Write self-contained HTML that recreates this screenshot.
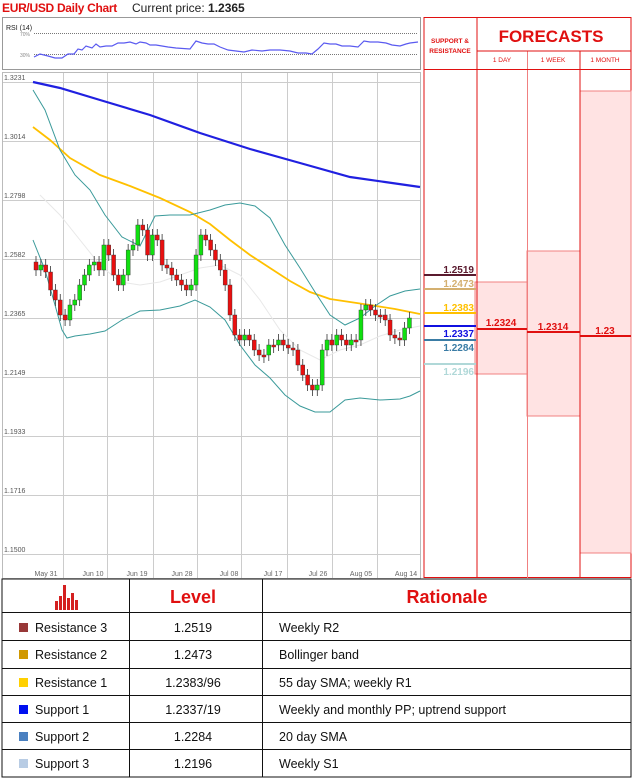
<!DOCTYPE html>
<html><head><meta charset="utf-8"><style>
body{margin:0;width:633px;height:778px;background:#fff;font-family:"Liberation Sans",sans-serif;position:relative;overflow:hidden}
.a{position:absolute}
</style></head><body>
<div class="a" style="left:2px;top:1px;font-size:12px;color:#e01010;font-weight:bold;letter-spacing:-0.3px">EUR/USD Daily Chart</div>
<div class="a" style="left:132px;top:1px;font-size:12px;color:#222">Current price: <b>1.2365</b></div>

<svg class="a" style="left:0;top:0" width="633" height="778" xmlns="http://www.w3.org/2000/svg" font-family="Liberation Sans, sans-serif">
<rect x="2.5" y="17.5" width="418" height="52" fill="#fff" stroke="#999"/>
<text x="6" y="30" font-size="7" fill="#222">RSI (14)</text>
<text x="20" y="36" font-size="5" fill="#888">70%</text>
<text x="20" y="57" font-size="5" fill="#888">30%</text>
<line x1="34" y1="33.5" x2="418" y2="33.5" stroke="#777" stroke-dasharray="1,1"/>
<line x1="34" y1="54.5" x2="418" y2="54.5" stroke="#777" stroke-dasharray="1,1"/>
<polyline fill="none" stroke="#5a5af0" stroke-width="1.2" points="34,57 40,54 48,56 55,58 62,58 68,54 74,54 78,49 82,50 86,46 92,48 96,44 100,47 106,46 112,46 118,43 124,43 130,42 136,44 140,42 146,43 150,45 156,45 162,46 168,47 176,48 190,49 196,41 202,43 208,44 214,44 220,47 228,50 236,51 244,52 252,50 262,51 270,50 280,50 290,51 298,53 306,53 312,54 318,49 324,43 330,44 336,44 342,46 350,46 358,47 364,41 370,42 378,42 386,43 392,45 400,46 406,44 410,43 418,42"/>
<rect x="2.5" y="72.5" width="418" height="506" fill="#fff" stroke="#bbb"/>
<g stroke="#ccc" stroke-width="1">
<line x1="3" y1="82.5" x2="420" y2="82.5"/><line x1="3" y1="141.5" x2="420" y2="141.5"/><line x1="3" y1="200.5" x2="420" y2="200.5"/><line x1="3" y1="259.5" x2="420" y2="259.5"/><line x1="3" y1="318.5" x2="420" y2="318.5"/><line x1="3" y1="377.5" x2="420" y2="377.5"/><line x1="3" y1="436.5" x2="420" y2="436.5"/><line x1="3" y1="495.5" x2="420" y2="495.5"/><line x1="3" y1="554.5" x2="420" y2="554.5"/>
<line x1="63.5" y1="73" x2="63.5" y2="578"/><line x1="107.5" y1="73" x2="107.5" y2="578"/><line x1="153.5" y1="73" x2="153.5" y2="578"/><line x1="197.5" y1="73" x2="197.5" y2="578"/><line x1="241.5" y1="73" x2="241.5" y2="578"/><line x1="287.5" y1="73" x2="287.5" y2="578"/><line x1="332.5" y1="73" x2="332.5" y2="578"/><line x1="377.5" y1="73" x2="377.5" y2="578"/>
</g>
<g font-size="7" fill="#555">
<text x="4" y="80">1.3231</text><text x="4" y="139">1.3014</text><text x="4" y="198">1.2798</text><text x="4" y="257">1.2582</text><text x="4" y="316">1.2365</text><text x="4" y="375">1.2149</text><text x="4" y="434">1.1933</text><text x="4" y="493">1.1716</text><text x="4" y="552">1.1500</text>
</g>
<g font-size="7" fill="#666" text-anchor="middle">
<text x="46" y="576">May 31</text><text x="93" y="576">Jun 10</text><text x="137" y="576">Jun 19</text><text x="182" y="576">Jun 28</text><text x="229" y="576">Jul 08</text><text x="273" y="576">Jul 17</text><text x="318" y="576">Jul 26</text><text x="361" y="576">Aug 05</text><text x="406" y="576">Aug 14</text>
</g>
<polyline fill="none" stroke="#e8e8e8" stroke-width="1" points="40,195 60,215 80,240 100,265 120,282 140,285 160,282 180,275 200,268 220,265 240,275 260,300 280,330 300,350 320,360 340,350 360,345 380,336 400,330 420,326"/>
<polyline fill="none" stroke="#2020e0" stroke-width="2.2" points="33,82 60,88 100,100 150,115 200,133 250,149 300,163 350,177 385,182 420,187"/>
<polyline fill="none" stroke="#ffc000" stroke-width="1.8" points="33,127 50,140 70,158 100,175 130,186 160,198 190,212 210,224 230,240 250,255 270,268 290,281 310,292 330,299 350,302 370,305 395,309 420,314"/>
<polyline fill="none" stroke="#3a9a9a" stroke-width="1" points="33,90 45,110 60,150 75,175 90,190 105,215 122,237 140,246 155,216 170,215 190,215 210,210 225,205 240,203 255,206 270,218 285,245 300,268 315,292 330,315 345,325 360,318 375,306 390,296 405,291 420,289"/>
<polyline fill="none" stroke="#3a9a9a" stroke-width="1" points="33,240 45,270 55,305 62,330 67,338 75,336 90,334 105,331 122,320 140,311 160,310 180,306 195,300 210,307 225,320 240,345 255,365 270,378 285,395 300,406 315,412 330,412 345,400 360,398 380,400 400,399 410,396 420,391"/>
<g id="cnd"></g>
<rect x="424" y="17.5" width="207" height="560" fill="none" stroke="#e01010"/>
<rect x="475" y="282" width="52" height="92" fill="#ffe3e3" stroke="#f08080"/>
<rect x="527" y="251" width="53" height="165" fill="#ffe3e3" stroke="#f08080"/>
<rect x="580" y="91" width="51" height="462" fill="#ffe3e3" stroke="#f08080"/>
<g stroke="#e01010"><line x1="477" y1="18" x2="477" y2="578"/><line x1="527.5" y1="51" x2="527.5" y2="578" stroke="#f08080"/><line x1="580" y1="51" x2="580" y2="578"/><line x1="477" y1="51" x2="631" y2="51"/><line x1="424" y1="69.5" x2="631" y2="69.5"/></g>
<text x="551" y="42" font-size="17" font-weight="bold" fill="#e01010" text-anchor="middle">FORECASTS</text>
<g font-size="6.5" fill="#e01010" text-anchor="middle" font-weight="bold"><text x="450" y="43">SUPPORT &amp;</text><text x="450" y="53">RESISTANCE</text></g>
<g font-size="6.5" fill="#e01010" text-anchor="middle"><text x="502" y="62">1 DAY</text><text x="553" y="62">1 WEEK</text><text x="605" y="62">1 MONTH</text></g>
<g stroke-width="2"><line x1="424" y1="275" x2="476" y2="275" stroke="#5a1a2e"/><line x1="424" y1="289" x2="476" y2="289" stroke="#d4b070"/><line x1="424" y1="313" x2="476" y2="313" stroke="#ffc000"/><line x1="424" y1="326" x2="476" y2="326" stroke="#1010e0"/><line x1="424" y1="340" x2="476" y2="340" stroke="#3a7ca5"/><line x1="424" y1="364" x2="476" y2="364" stroke="#b0d8d8"/>
<line x1="477" y1="329" x2="527" y2="329" stroke="#e01010"/><line x1="527" y1="332" x2="580" y2="332" stroke="#e01010"/><line x1="580" y1="336" x2="631" y2="336" stroke="#e01010"/></g>
<g font-size="10" font-weight="bold" text-anchor="end"><text x="474" y="273" fill="#5a1a2e">1.2519</text><text x="474" y="287" fill="#d4b070">1.2473</text><text x="474" y="311" fill="#ffc000">1.2383</text><text x="474" y="337" fill="#1010e0">1.2337</text><text x="474" y="351" fill="#3a7ca5">1.2284</text><text x="474" y="375" fill="#b0d8d8">1.2196</text></g>
<g font-size="10" font-weight="bold" fill="#e01010" text-anchor="middle"><text x="501" y="326">1.2324</text><text x="553" y="330">1.2314</text><text x="605" y="334">1.23</text></g>
<rect x="2" y="579" width="629" height="198" fill="#fff" stroke="#111"/>
<g stroke="#111"><line x1="129.5" y1="579" x2="129.5" y2="777"/><line x1="262.5" y1="579" x2="262.5" y2="777"/>
<line x1="2" y1="612.5" x2="631" y2="612.5"/><line x1="2" y1="640.5" x2="631" y2="640.5"/><line x1="2" y1="668.5" x2="631" y2="668.5"/><line x1="2" y1="695.5" x2="631" y2="695.5"/><line x1="2" y1="722.5" x2="631" y2="722.5"/><line x1="2" y1="749.5" x2="631" y2="749.5"/></g>
<g fill="#d42020"><rect x="55" y="601" width="3" height="9"/><rect x="59" y="596" width="3" height="14"/><rect x="63" y="585" width="3" height="25"/><rect x="67" y="598" width="3" height="12"/><rect x="71" y="593" width="3" height="17"/><rect x="75" y="600" width="3" height="10"/></g>
<g font-size="18" font-weight="bold" fill="#e01010" text-anchor="middle"><text x="193" y="603">Level</text><text x="447" y="603">Rationale</text></g>
<rect x="19" y="623" width="9" height="9" fill="#983838"/><rect x="19" y="650" width="9" height="9" fill="#d09800"/><rect x="19" y="678" width="9" height="9" fill="#ffd000"/><rect x="19" y="705" width="9" height="9" fill="#0010f0"/><rect x="19" y="732" width="9" height="9" fill="#4a80c0"/><rect x="19" y="759" width="9" height="9" fill="#b8cce4"/>
<g font-size="12.5" fill="#111"><text x="35" y="632">Resistance 3</text><text x="35" y="659">Resistance 2</text><text x="35" y="687">Resistance 1</text><text x="35" y="714">Support 1</text><text x="35" y="741">Support 2</text><text x="35" y="768">Support 3</text>
<text x="279" y="632">Weekly R2</text><text x="279" y="659">Bollinger band</text><text x="279" y="687">55 day SMA; weekly R1</text><text x="279" y="714">Weekly and monthly PP; uptrend support</text><text x="279" y="741">20 day SMA</text><text x="279" y="768">Weekly S1</text></g>
<g font-size="12.5" fill="#111" text-anchor="middle"><text x="193" y="632">1.2519</text><text x="193" y="659">1.2473</text><text x="193" y="687">1.2383/96</text><text x="193" y="714">1.2337/19</text><text x="193" y="741">1.2284</text><text x="193" y="768">1.2196</text></g>
</svg>
<script>
(function(){
var c=[262,270,265,272,290,300,315,320,305,300,285,275,265,262,270,245,255,275,285,275,250,245,225,230,255,235,240,265,268,275,280,285,290,285,255,235,240,250,260,270,285,315,335,340,335,340,350,355,355,345,345,340,345,348,350,365,375,385,390,385,350,340,345,335,340,345,340,340,310,305,310,315,315,320,335,338,340,328,318];
var ns='http://www.w3.org/2000/svg',g=document.getElementById('cnd'),px=34;
function mk(t,a){var e=document.createElementNS(ns,t);for(var k in a)e.setAttribute(k,a[k]);g.appendChild(e);}
for(var i=1;i<c.length;i++){var o=c[i-1],cl=c[i];var ty=Math.min(o,cl),h=Math.max(Math.abs(o-cl),2);var col=cl<o?'#10e010':'#e81010';
mk('line',{x1:px+2,y1:ty-6,x2:px+2,y2:ty+h+6,stroke:'#333','stroke-width':0.8});
mk('rect',{x:px,y:ty,width:4,height:h,fill:col,stroke:'#333','stroke-width':0.4});px+=4.85;}
})();
</script>
</body></html>
